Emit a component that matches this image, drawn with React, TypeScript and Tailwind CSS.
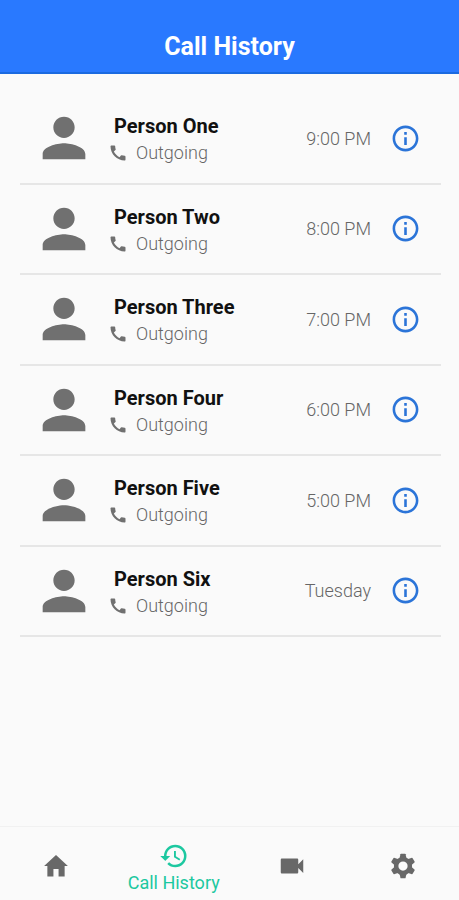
import { MdCall, MdHistory, MdInfoOutline, MdPerson, MdVideocam } from "react-icons/md";

const calls = [
    { name: "Person One", time: "9:00 PM" },
    { name: "Person Two", time: "8:00 PM" },
    { name: "Person Three", time: "7:00 PM" },
    { name: "Person Four", time: "6:00 PM" },
    { name: "Person Five", time: "5:00 PM" },
    { name: "Person Six", time: "Tuesday" },
];

function HomeIcon() {
    return (
        <svg viewBox="0 0 24 24" fill="currentColor" className="size-7" aria-hidden="true">
            <path d="M12 2.5 1.8 12h2.8v9h5.2v-6.5h4.4V21h5.2v-9h2.8z" />
        </svg>
    );
}

const teeth = [0, 60, 120, 180, 240, 300];

function GearIcon() {
    return (
        <svg viewBox="0 0 24 24" fill="currentColor" className="size-[30px]" aria-hidden="true">
            <circle cx="12" cy="12" r="5.5" fill="none" stroke="currentColor" strokeWidth="3.6" />
            {teeth.map((angle) => (
                <path
                    key={angle}
                    d="M9.2 6.2 9.9 2.6q.1-.4.5-.4h3.2q.4 0 .5.4l.7 3.6z"
                    transform={`rotate(${angle} 12 12)`}
                />
            ))}
        </svg>
    );
}

function CallRow({ name, time }: { name: string; time: string }) {
    return (
        <li className="flex items-center border-b-2 border-[#e6e6e6] pl-3 pr-5">
            <MdPerson className="size-16 shrink-0 text-[#707070]" />

            <div className="ml-3 min-w-0 flex-1 pt-0.5">
                <h2 className="pl-1.5 text-[20px] leading-7 font-bold text-[#111111]">{name}</h2>
                <p className="flex items-center gap-2 text-[18px] leading-[26px] font-light text-[#666666]">
                    <MdCall className="size-5 text-[#707070]" />
                    Outgoing
                </p>
            </div>

            <span className="text-[18px] font-light text-[#666666]">{time}</span>
            <button type="button" aria-label={`Details for ${name}`} className="ml-[19px]">
                <MdInfoOutline className="size-[31px] text-[#2b74d8]" />
            </button>
        </li>
    );
}

export default function App() {
    return (
        <div className="flex min-h-screen flex-col bg-[#fafafa] font-['Roboto',sans-serif]">
            <header className="border-b-2 border-[#1b6ae0] bg-[#2979ff] pt-[31px] pb-[9px] text-center">
                <h1 className="text-[25px] leading-8 font-bold text-white">Call History</h1>
            </header>

            <main className="flex-1 pt-5 pr-[18px] pl-5">
                <ul className="grid min-h-[543px] auto-rows-fr">
                    {calls.map((call) => (
                        <CallRow key={call.name} name={call.name} time={call.time} />
                    ))}
                </ul>
            </main>

            <nav className="flex h-[74px] items-center border-t border-[#f1f1f1] pt-1 text-[#686868]">
                <a href="#home" aria-label="Home" className="flex flex-1 justify-center">
                    <HomeIcon />
                </a>
                <a
                    href="#history"
                    aria-current="page"
                    className="flex w-[124px] flex-col items-center pt-1 text-[#1cc8a0]"
                >
                    <MdHistory className="size-[30px]" />
                    <span className="text-[18px] leading-6">Call History</span>
                </a>
                <a href="#video" aria-label="Video" className="flex flex-1 justify-center">
                    <MdVideocam className="size-[30px]" />
                </a>
                <a href="#settings" aria-label="Settings" className="flex flex-1 justify-center">
                    <GearIcon />
                </a>
            </nav>
        </div>
    );
}
